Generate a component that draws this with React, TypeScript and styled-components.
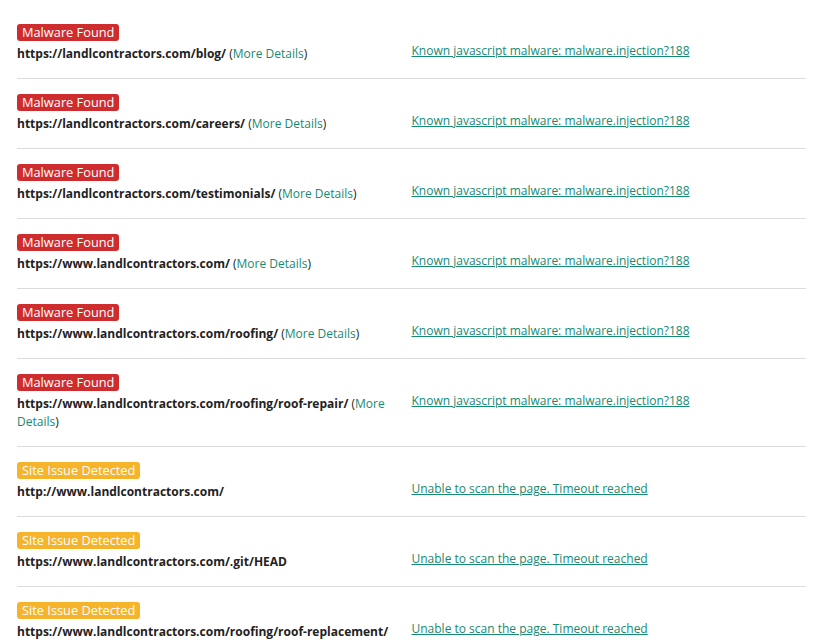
import React from "react";
import styled, { createGlobalStyle } from "styled-components";

const GlobalStyle = createGlobalStyle`
  body {
    margin: 0;
    background: #ffffff;
    font-family: "Open Sans", "Liberation Sans", sans-serif;
    color: #222222;
  }
`;

const List = styled.div`
  padding: 9px 14px 0 17px;
`;

const Row = styled.div`
  display: grid;
  grid-template-columns: 1fr 1fr;
  padding: 15px 0;
  border-bottom: 1px solid #dcdcdc;
`;

const Left = styled.div`
  display: flex;
  flex-direction: column;
  align-items: flex-start;
  padding-right: 10px;
`;

const Badge = styled.span<{ $kind: "malware" | "issue" }>`
  display: block;
  height: 17px;
  line-height: 17px;
  padding: 0 5px;
  border-radius: 3px;
  font-size: 12.8px;
  color: #ffffff;
  background: ${(p) => (p.$kind === "malware" ? "#cf2c2e" : "#f6b42b")};
`;

const Url = styled.div`
  margin-top: 4px;
  font-size: 12px;
  line-height: 18px;
`;

const Path = styled.strong`
  font-weight: 700;
  color: #222222;
`;

const Details = styled.a`
  color: #168a72;
  text-decoration: none;
`;

const Right = styled.div`
  padding-top: 18px;
  font-size: 12px;
  line-height: 18px;
`;

const Link = styled.a`
  color: #168a72;
  text-decoration: underline;
`;

type Item = {
  kind: "malware" | "issue";
  url: string;
  details: boolean;
  message: string;
};

const MALWARE = "Known javascript malware: malware.injection?188";
const TIMEOUT = "Unable to scan the page. Timeout reached";

const items: Item[] = [
  { kind: "malware", url: "https://landlcontractors.com/blog/", details: true, message: MALWARE },
  { kind: "malware", url: "https://landlcontractors.com/careers/", details: true, message: MALWARE },
  { kind: "malware", url: "https://landlcontractors.com/testimonials/", details: true, message: MALWARE },
  { kind: "malware", url: "https://www.landlcontractors.com/", details: true, message: MALWARE },
  { kind: "malware", url: "https://www.landlcontractors.com/roofing/", details: true, message: MALWARE },
  { kind: "malware", url: "https://www.landlcontractors.com/roofing/roof-repair/", details: true, message: MALWARE },
  { kind: "issue", url: "http://www.landlcontractors.com/", details: false, message: TIMEOUT },
  { kind: "issue", url: "https://www.landlcontractors.com/.git/HEAD", details: false, message: TIMEOUT },
  { kind: "issue", url: "https://www.landlcontractors.com/roofing/roof-replacement/", details: false, message: TIMEOUT },
];

export default function App() {
  return (
    <>
      <GlobalStyle />
      <List>
        {items.map((item, index) => (
          <Row key={index}>
            <Left>
              <Badge $kind={item.kind}>
                {item.kind === "malware" ? "Malware Found" : "Site Issue Detected"}
              </Badge>
              <Url>
                <Path>{item.url}</Path>
                {item.details && (
                  <>
                    {" "}(<Details href="#">More Details</Details>)
                  </>
                )}
              </Url>
            </Left>
            <Right>
              <Link href="#">{item.message}</Link>
            </Right>
          </Row>
        ))}
      </List>
    </>
  );
}
